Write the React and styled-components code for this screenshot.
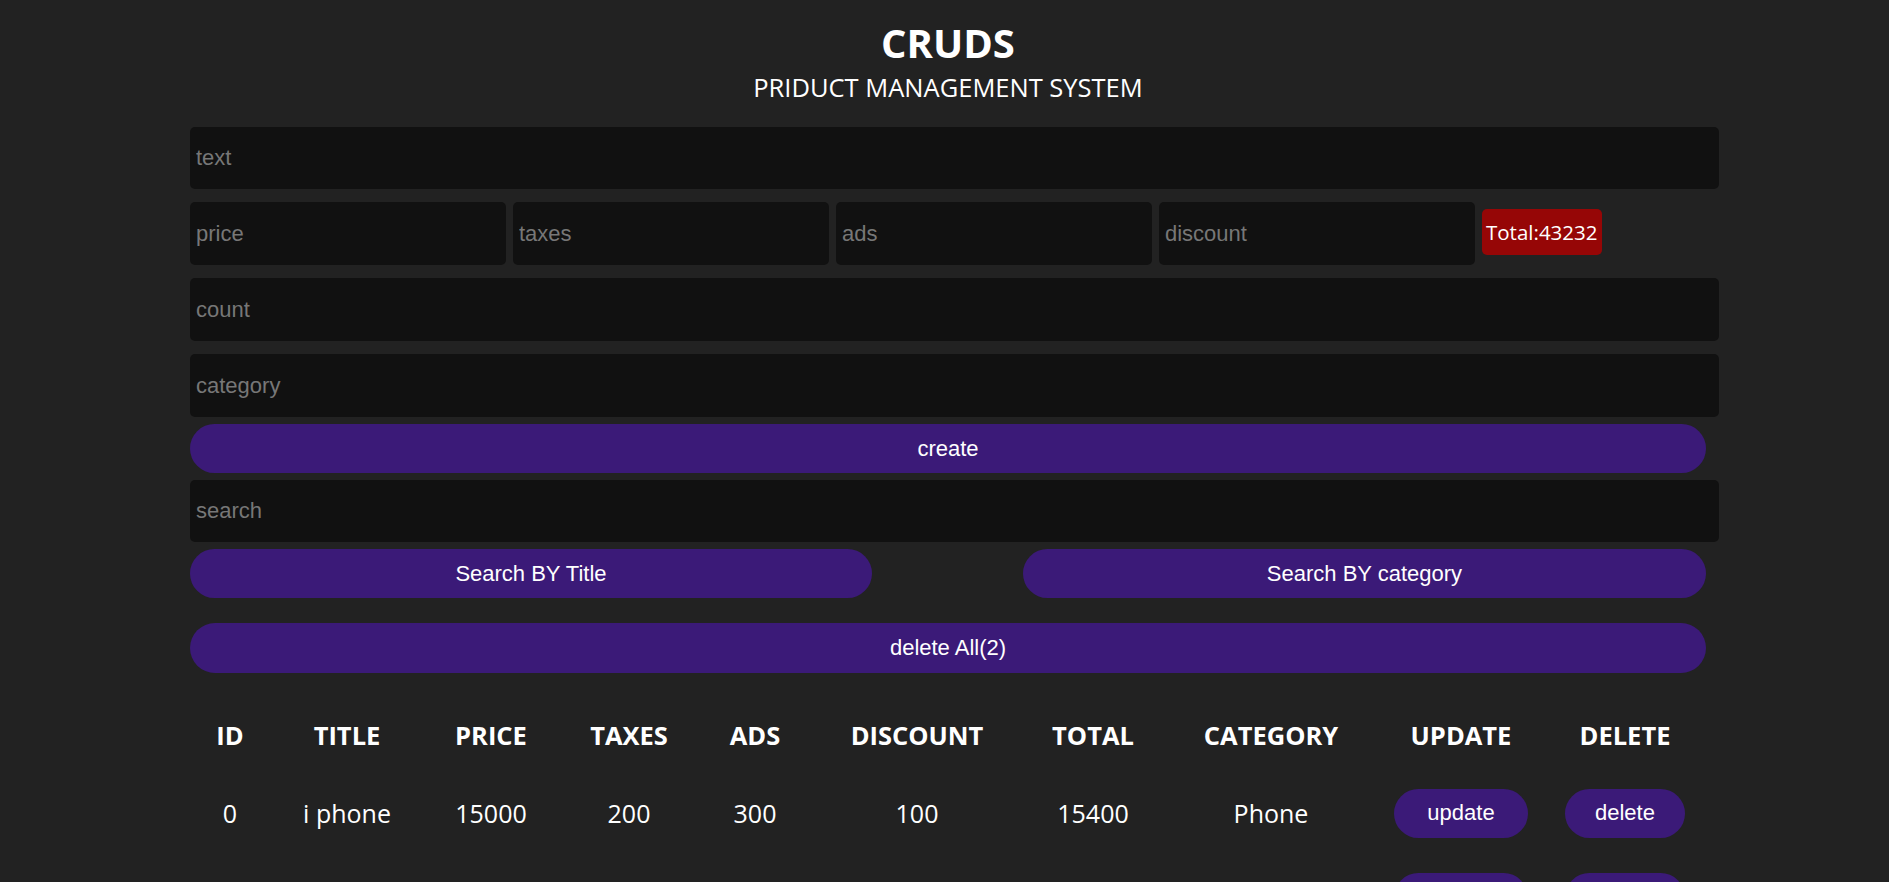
import styled, { createGlobalStyle } from "styled-components";

const GlobalStyle = createGlobalStyle`
  body {
    margin: 0;
    background-color: #222222;
    color: #ffffff;
    font-family: "Open Sans", "Noto Sans", sans-serif;
  }
  * {
    box-sizing: border-box;
  }
`;

const Container = styled.div`
  width: 1529px;
  margin-left: 190px;
  padding-bottom: 40px;
`;

const Head = styled.div`
  width: 1516px;
  text-align: center;
  padding-top: 15px;
  margin-bottom: 23px;
`;

const Title = styled.h1`
  margin: 0;
  font-size: 40px;
  font-weight: 700;
  line-height: 56px;
`;

const SubTitle = styled.p`
  margin: 0;
  font-size: 25.5px;
  line-height: 33px;
`;

const Form = styled.div`
  display: flex;
  flex-direction: column;
  gap: 7px;
`;

const Fields = styled.div`
  display: flex;
  flex-direction: column;
  gap: 13px;
`;

const Input = styled.input`
  width: ${(p) => (p.$small ? "316px" : "100%")};
  height: ${(p) => p.$height || "63px"};
  padding: 0 6px;
  border: none;
  outline: none;
  border-radius: 5px;
  background-color: #111111;
  color: #ffffff;
  font-family: "Liberation Sans", Arial, sans-serif;
  font-size: 22px;
  &::placeholder {
    color: #777777;
  }
`;

const PriceRow = styled.div`
  display: flex;
  align-items: center;
  gap: 7px;
`;

const Total = styled.small`
  display: flex;
  align-items: center;
  height: 46px;
  padding: 0 4px;
  margin-top: -3px;
  border-radius: 5px;
  background-color: #960606;
  color: #ffffff;
  font-size: 20.5px;
`;

const Button = styled.button`
  width: ${(p) => p.$width || "1516px"};
  height: ${(p) => p.$height || "49px"};
  padding: ${(p) => p.$pad || "0"};
  margin-top: ${(p) => p.$top || "0"};
  border: none;
  border-radius: 25px;
  background-color: #3b1a78;
  color: #ffffff;
  font-family: "Liberation Sans", Arial, sans-serif;
  font-size: 22px;
  cursor: pointer;
  &:hover {
    background-color: #4a2294;
  }
`;

const SearchRow = styled.div`
  width: 1516px;
  display: flex;
  justify-content: space-between;
`;

const Table = styled.table`
  width: 1518px;
  margin-top: 25px;
  border-collapse: collapse;
  text-align: center;
`;

const Th = styled.th`
  height: 73px;
  padding: 0;
  font-size: 25.5px;
  font-weight: 700;
`;

const Td = styled.td`
  height: 84px;
  padding: 0;
  font-size: 25px;
`;

const columns = [80, 154, 134, 142, 110, 214, 138, 218, 162, 166];
const heads = ["ID", "TITLE", "PRICE", "TAXES", "ADS", "DISCOUNT", "TOTAL", "CATEGORY", "UPDATE", "DELETE"];

const products = [
  { title: "i phone", price: 15000, taxes: 200, ads: 300, discount: 100, total: 15400, category: "Phone" },
  { title: "samsung", price: 27000, taxes: 400, ads: 500, discount: 68, total: 27832, category: "Phone" },
];

export default function App() {
  return (
    <>
      <GlobalStyle />
      <Container>
        <Head>
          <Title>CRUDS</Title>
          <SubTitle>PRIDUCT MANAGEMENT SYSTEM</SubTitle>
        </Head>
        <Form>
          <Fields>
            <Input $height="62px" placeholder="text" />
            <PriceRow>
              <Input $small placeholder="price" />
              <Input $small placeholder="taxes" />
              <Input $small placeholder="ads" />
              <Input $small placeholder="discount" />
              <Total>Total:43232</Total>
            </PriceRow>
            <Input placeholder="count" />
            <Input placeholder="category" />
          </Fields>
          <Button>create</Button>
          <Input $height="62px" placeholder="search" />
          <SearchRow>
            <Button $width="682px">Search BY Title</Button>
            <Button $width="683px">Search BY category</Button>
          </SearchRow>
          <Button $top="18px" $height="50px">delete All(2)</Button>
        </Form>
        <Table>
          <colgroup>
            {columns.map((w, i) => (
              <col key={i} width={w} />
            ))}
          </colgroup>
          <thead>
            <tr>
              {heads.map((h) => (
                <Th key={h}>{h}</Th>
              ))}
            </tr>
          </thead>
          <tbody>
            {products.map((p, i) => (
              <tr key={i}>
                <Td>{i}</Td>
                <Td>{p.title}</Td>
                <Td>{p.price}</Td>
                <Td>{p.taxes}</Td>
                <Td>{p.ads}</Td>
                <Td>{p.discount}</Td>
                <Td>{p.total}</Td>
                <Td>{p.category}</Td>
                <Td>
                  <Button $width="auto" $pad="0 33px">update</Button>
                </Td>
                <Td>
                  <Button $width="auto" $pad="0 30px">delete</Button>
                </Td>
              </tr>
            ))}
          </tbody>
        </Table>
      </Container>
    </>
  );
}
